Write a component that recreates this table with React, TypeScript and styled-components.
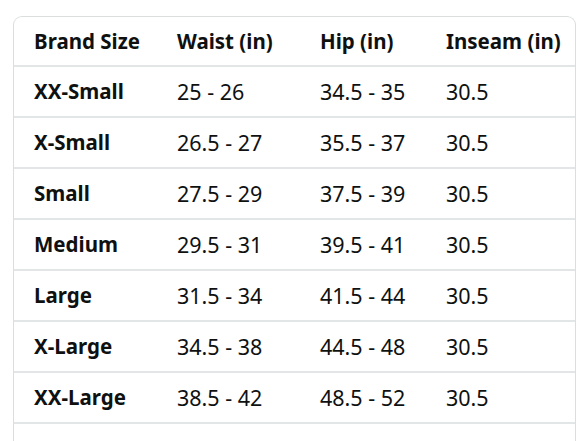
import React from "react";
import styled, { createGlobalStyle } from "styled-components";

const GlobalStyle = createGlobalStyle`
  body {
    margin: 0;
    background: #ffffff;
    font-family: "Noto Sans", "Open Sans", sans-serif;
    color: #0f1111;
  }
`;

const Page = styled.div`
  padding: 16px 12px 0 13px;
  height: 441px;
  box-sizing: border-box;
  overflow: hidden;
`;

const Card = styled.div`
  border: 1px solid #dcdede;
  border-bottom: none;
  border-radius: 9px 9px 0 0;
  overflow: hidden;
`;

const Table = styled.table`
  width: 100%;
  border-collapse: collapse;
  table-layout: fixed;
`;

const Cell = styled.td<{ $bold?: boolean }>`
  height: 49px;
  padding: 0 0 0 20px;
  font-size: ${(p) => (p.$bold ? "20.5px" : "21.5px")};
  font-weight: ${(p) => (p.$bold ? 700 : 400)};
  border-bottom: 2px solid #e3e6e6;
  white-space: nowrap;
  text-align: left;
  line-height: 1;
`;

const Head = styled(Cell).attrs({ as: "th" })`
  font-weight: 700;
  font-size: 20.5px;
  height: 48px;
`;

const rows = [
  ["XX-Small", "25 - 26", "34.5 - 35", "30.5"],
  ["X-Small", "26.5 - 27", "35.5 - 37", "30.5"],
  ["Small", "27.5 - 29", "37.5 - 39", "30.5"],
  ["Medium", "29.5 - 31", "39.5 - 41", "30.5"],
  ["Large", "31.5 - 34", "41.5 - 44", "30.5"],
  ["X-Large", "34.5 - 38", "44.5 - 48", "30.5"],
  ["XX-Large", "38.5 - 42", "48.5 - 52", "30.5"],
  ["", "", "", ""],
];

export default function App() {
  return (
    <>
      <GlobalStyle />
      <Page>
        <Card>
          <Table>
            <colgroup>
              <col style={{ width: 143 }} />
              <col style={{ width: 143 }} />
              <col style={{ width: 126 }} />
              <col />
            </colgroup>
            <thead>
              <tr>
                <Head>Brand Size</Head>
                <Head>Waist (in)</Head>
                <Head>Hip (in)</Head>
                <Head>Inseam (in)</Head>
              </tr>
            </thead>
            <tbody>
              {rows.map((r, i) => (
                <tr key={i}>
                  <Cell $bold>{r[0]}</Cell>
                  <Cell>{r[1]}</Cell>
                  <Cell>{r[2]}</Cell>
                  <Cell>{r[3]}</Cell>
                </tr>
              ))}
            </tbody>
          </Table>
        </Card>
      </Page>
    </>
  );
}
